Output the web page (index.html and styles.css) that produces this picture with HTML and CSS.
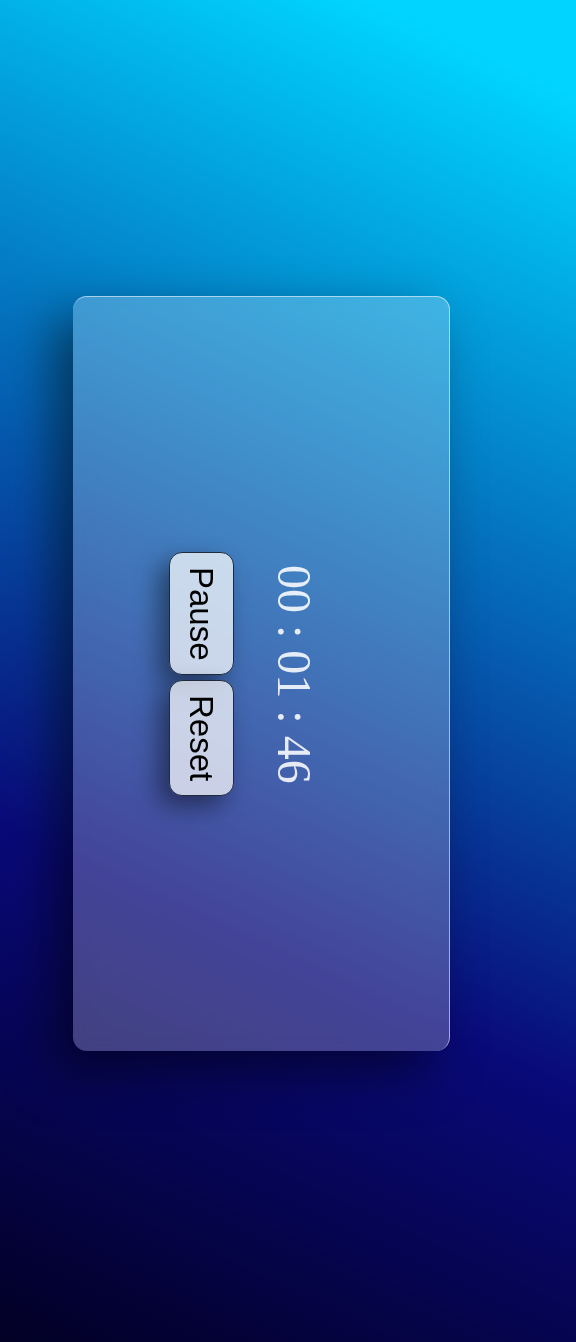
FILE: index.html
```html
<!DOCTYPE html>
<html lang="en">
<head>
<meta charset="utf-8">
<title>Stopwatch</title>
<link rel="stylesheet" href="styles.css">
</head>
<body>
  <main class="card">
    <div class="timer">
      <div class="time">00 : 01 : 46</div>
      <div class="controls">
        <button class="btn" type="button">Pause</button>
        <button class="btn" type="button">Reset</button>
      </div>
    </div>
  </main>
</body>
</html>
```
FILE: styles.css
```css
* {
  box-sizing: border-box;
}

html,
body {
  margin: 0;
  height: 100%;
}

body {
  min-height: 1342px;
  display: flex;
  align-items: center;
  justify-content: center;
  padding: 5px 53px 0 0;
  background: linear-gradient(25deg, #020024 0%, #090979 32%, #00d4ff 94%);
  font-family: "Liberation Sans", Arial, sans-serif;
}

.card {
  width: 377px;
  height: 755px;
  display: flex;
  align-items: center;
  justify-content: center;
  border-radius: 14px;
  background: rgba(255, 255, 255, 0.24);
  border-top: 1px solid rgba(255, 255, 255, 0.55);
  border-right: 1px solid rgba(255, 255, 255, 0.55);
  box-shadow: -20px 20px 50px rgba(0, 0, 0, 0.5);
  backdrop-filter: blur(10px);
}

.timer {
  writing-mode: vertical-rl;
  display: flex;
  flex-direction: column;
  align-items: center;
  gap: 33px;
  padding-block-start: 32px;
}

.time {
  font-family: "Liberation Serif", "Times New Roman", serif;
  font-size: 48px;
  line-height: normal;
  color: rgba(255, 255, 255, 0.87);
}

.controls {
  display: flex;
  gap: 5px;
}

.btn {
  writing-mode: vertical-rl;
  font-family: "Liberation Sans", Arial, sans-serif;
  font-size: 33px;
  line-height: normal;
  color: #000;
  background: rgba(255, 255, 255, 0.72);
  border: 1px solid #1f2b3b;
  border-radius: 13px;
  padding-block: 12.5px;
  padding-inline: 14px;
  margin: 0;
  box-shadow: -10px 10px 24px rgba(0, 0, 0, 0.45);
}
```
